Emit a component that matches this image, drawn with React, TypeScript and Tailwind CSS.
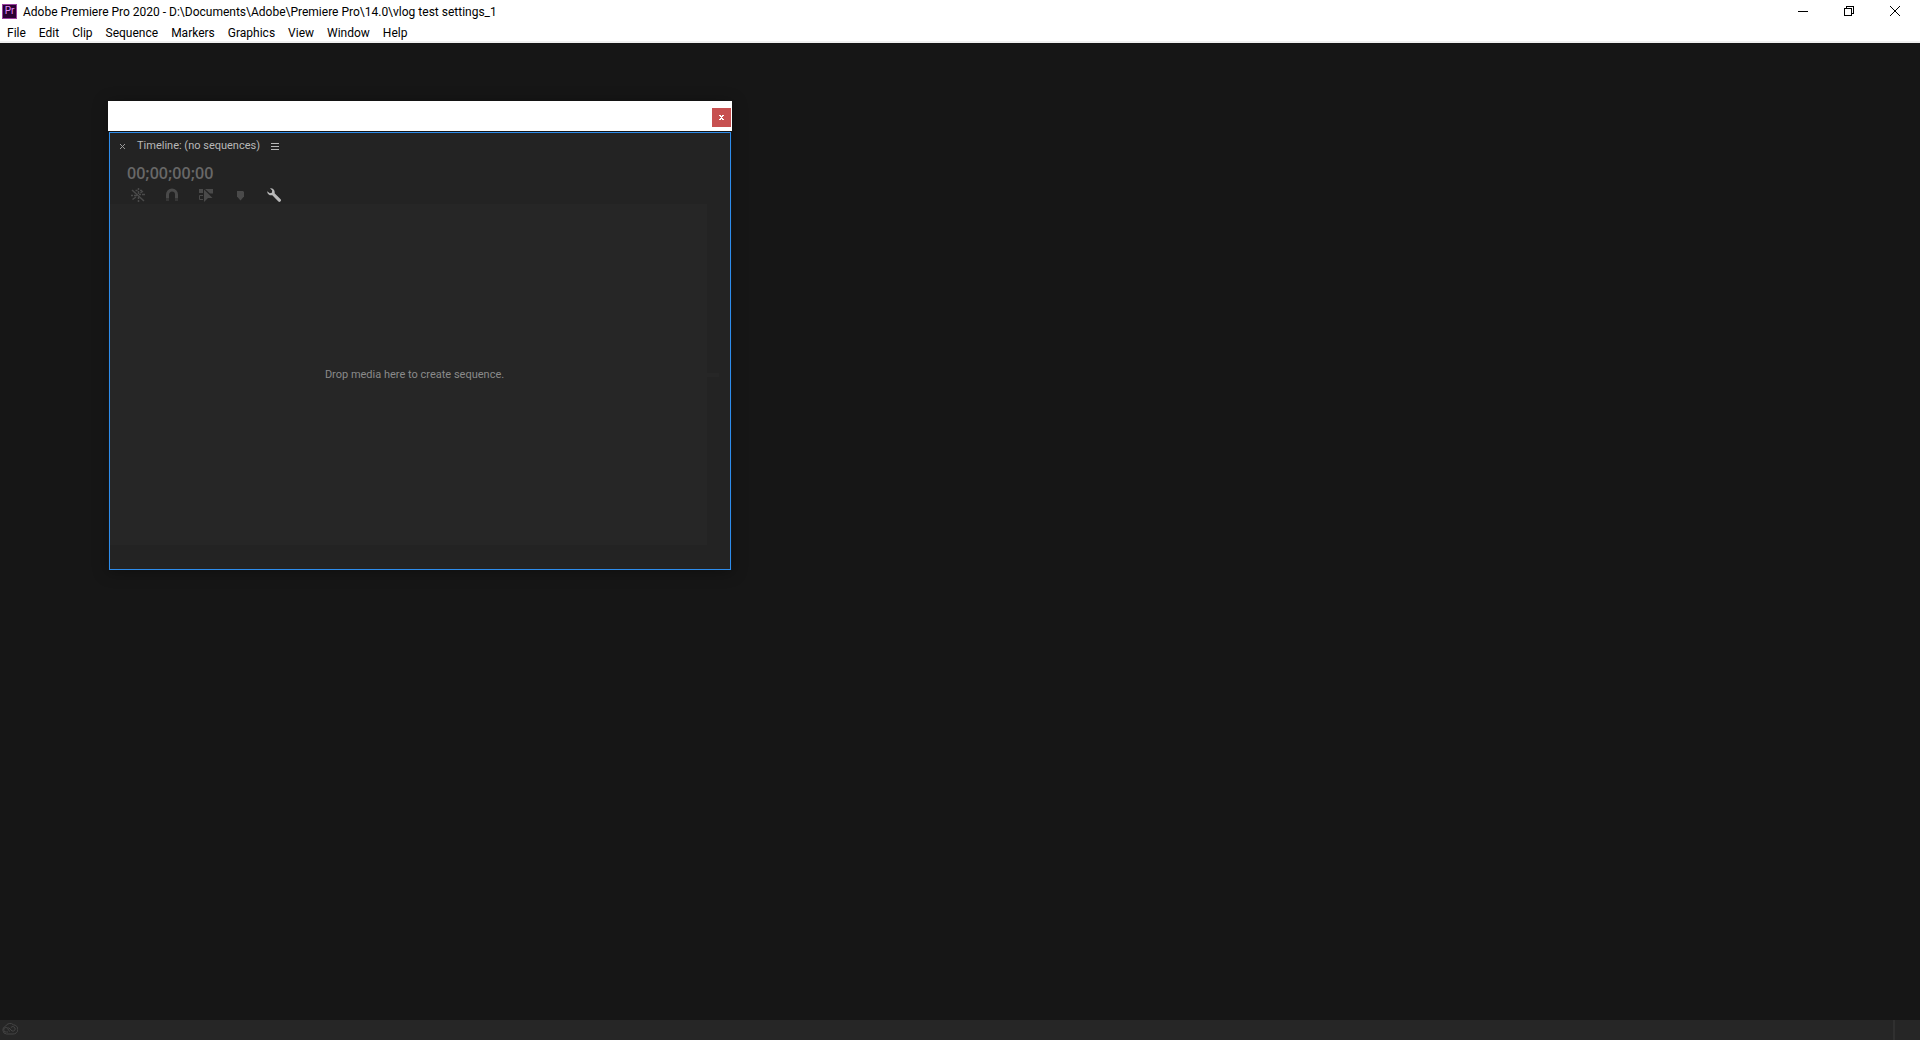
import React from "react";

const menuItems = [
  "File",
  "Edit",
  "Clip",
  "Sequence",
  "Markers",
  "Graphics",
  "View",
  "Window",
  "Help",
];

const TitleBar: React.FC = () => {
  return (
    <div className="flex h-[22px] items-center justify-between">
      <div className="flex items-center gap-[6px] pl-[2px]">
        <div className="flex h-[15px] w-[15px] items-center justify-center border border-[#9a3fa0] bg-[#2a0033] text-[10px] leading-none text-[#e08af5]">
          Pr
        </div>
        <h1 className="pt-px text-[12px] leading-4 whitespace-nowrap">
          Adobe Premiere Pro 2020 - D:\Documents\Adobe\Premiere
          Pro\14.0\vlog test settings_1
        </h1>
      </div>
      <div className="flex h-5 items-center pr-0.5">
        <button aria-label="Minimize" className="flex w-[46px] justify-center">
          <svg width="10" height="10" viewBox="0 0 10 10" shapeRendering="crispEdges">
            <path d="M0 5.5H10" stroke="#000" />
          </svg>
        </button>
        <button aria-label="Restore" className="flex w-[46px] justify-center">
          <svg width="10" height="10" viewBox="0 0 10 10" fill="none" stroke="#000" shapeRendering="crispEdges">
            <path d="M0.5 2.5H7.5V9.5H0.5ZM2.5 2.5V0.5H9.5V7.5H7.5" />
          </svg>
        </button>
        <button aria-label="Close" className="flex w-[46px] justify-center">
          <svg width="10" height="10" viewBox="0 0 10 10" fill="none" stroke="#000">
            <path d="M0 0L10 10M10 0L0 10" />
          </svg>
        </button>
      </div>
    </div>
  );
};

const MenuBar: React.FC = () => {
  return (
    <nav className="flex h-[19px] items-center gap-[13px] pt-[3px] pl-[7px]">
      {menuItems.map((item) => (
        <button key={item} className="text-[12px] leading-4">
          {item}
        </button>
      ))}
    </nav>
  );
};

const TimelineTools: React.FC = () => {
  return (
    <div className="flex h-4 items-center pl-[11px] text-[#4a4a4a]">
      <button aria-label="Insert as nests" className="flex w-[34px] justify-center">
        <svg width="14" height="14" viewBox="0 0 14 14" fill="none" stroke="currentColor" strokeWidth="1.5">
          <path d="M1 2L13 13" />
          <path d="M7.5 0V2M7.5 3V6M4.5 2.5H6.5M9 2.5H11M0 7.5H2M3 7.5H6M8 6.5H10M11 6.5H14M7.5 9V11M7.5 12V14M1.5 11.5L5 9M9.5 5L12 3" />
        </svg>
      </button>
      <button aria-label="Snap" className="flex w-[34px] justify-center">
        <svg width="14" height="14" viewBox="0 0 14 14" fill="none" stroke="currentColor" strokeWidth="3">
          <path d="M2.5 10V6.5A4.5 4.5 0 0 1 11.5 6.5V10" />
          <path d="M2.5 10V13M11.5 10V13" strokeOpacity="0.5" />
        </svg>
      </button>
      <button aria-label="Linked selection" className="flex w-[34px] justify-center">
        <svg width="14" height="14" viewBox="0 0 14 14" fill="currentColor">
          <path d="M0 1H4V5H0ZM6 1H14V5.500H11Z" />
          <path d="M5 1.500L13.500 10H9L5 14Z" />
          <path d="M4 7.500H0.500V11.500H4" fill="none" stroke="currentColor" />
        </svg>
      </button>
      <button aria-label="Add marker" className="flex w-[34px] justify-center">
        <svg width="14" height="14" viewBox="0 0 14 14" fill="currentColor">
          <path d="M4 3H10L11 4V8.500L7.500 12.500L4 8.500V4Z" />
        </svg>
      </button>
      <button aria-label="Timeline display settings" className="flex w-[34px] justify-center text-[#b8b8b8]">
        <svg width="14" height="14" viewBox="0 0 14 14" fill="currentColor">
          <path d="M3 0.300A4 4 0 0 1 7.600 5.200L13.600 11.200A1.600 1.600 0 0 1 11.400 13.500L5.300 7.200A4 4 0 0 1 0.200 3.200L2.800 5.200L4.900 4.700L5.200 2.600Z" />
        </svg>
      </button>
    </div>
  );
};

const TimelineWindow: React.FC = () => {
  return (
    <section
      aria-label="Timeline"
      className="absolute top-[58px] left-[108px] w-[624px] shadow-[0_2px_14px_rgba(0,0,0,0.35)]"
    >
      <div className="flex h-[30px] justify-end bg-white pt-[7px] pr-px">
        <button
          aria-label="Close panel window"
          className="flex h-[19px] w-[19px] items-center justify-center bg-[#c75050]"
        >
          <svg width="5" height="5" viewBox="0 0 5 5" fill="#fff" shapeRendering="crispEdges">
            <path d="M0 0H2V1H3V0H5V1H4V2H3V3H4V4H5V5H3V4H2V5H0V4H1V3H2V2H1V1H0Z" />
          </svg>
        </button>
      </div>
      <div className="mx-px mt-px border border-[#2d8ceb] bg-[#232323]">
        <div className="flex h-[26px] items-center pl-[10px] text-[#b8b8b8]">
          <button aria-label="Close tab" className="mr-[12px]">
            <svg width="5" height="5" viewBox="0 0 5 5" stroke="#9a9a9a">
              <path d="M0 0L5 5M5 0L0 5" />
            </svg>
          </button>
          <h2 className="text-[11px] leading-4">Timeline: (no sequences)</h2>
          <button aria-label="Panel menu" className="ml-[11px]">
            <svg width="8" height="7" viewBox="0 0 8 7" stroke="#b8b8b8" shapeRendering="crispEdges">
              <path d="M0 0.500H8M0 3.500H8M0 6.500H8" />
            </svg>
          </button>
        </div>
        <div className="flex h-[28px] items-center pl-[17px] font-['Open_Sans',sans-serif] text-[16px] font-semibold text-[#686868]">
          00;00;00;00
        </div>
        <TimelineTools />
        <div className="mt-px mb-6 flex h-[341px] items-center">
          <div className="flex h-full flex-1 items-center justify-center bg-[#262626] pt-px pl-3 text-[11px] text-[#8a8a8a]">
            Drop media here to create sequence.
          </div>
          <div className="mr-[11px] h-1 w-3 bg-[#262626]" />
        </div>
      </div>
    </section>
  );
};

const StatusBar: React.FC = () => {
  return (
    <footer className="flex h-5 items-center justify-between bg-[#262626]">
      <svg className="mb-[3px] ml-[2px]" width="16" height="12" viewBox="0 0 16 12" fill="none" stroke="#444">
        <path d="M4.500 11A4 4 0 0 1 3.600 3.200A5 5 0 0 1 11.500 1.800A4.600 4.600 0 0 1 11 11Z" />
        <path d="M8 8.500L6.300 7A2.300 2.300 0 1 0 4.600 9H6M6.500 4.500L10 8A2.300 2.300 0 1 0 8.800 4.800" />
      </svg>
      <div className="mr-[25px] h-5 w-[2px] bg-[#303030]" />
    </footer>
  );
};

const App: React.FC = () => {
  return (
    <div className="flex min-h-screen flex-col bg-[#161616] font-[Roboto,sans-serif] text-black">
      <header className="border-b-2 border-[#f0f0f0] bg-white">
        <TitleBar />
        <MenuBar />
      </header>
      <main className="relative flex-1 overflow-hidden">
        <TimelineWindow />
      </main>
      <StatusBar />
    </div>
  );
};

export default App;
